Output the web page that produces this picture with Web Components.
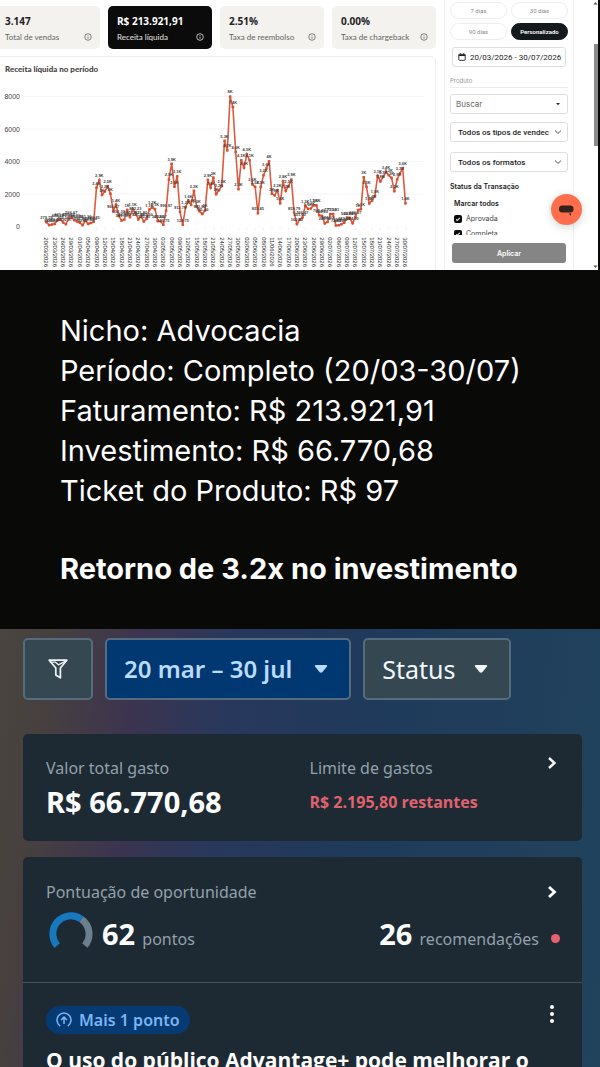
<!DOCTYPE html>
<html lang="pt-BR">
<head>
<meta charset="utf-8">
<meta name="viewport" content="width=device-width, initial-scale=1">
<title>Retorno de 3.2x no investimento</title>
<style>
	body {
		margin: 0;
		height: 100vh;
		display: flex;
		flex-direction: column;
		overflow: hidden;
		background: #090908;
		font-family: "Open Sans", "Noto Sans", sans-serif;
	}
	ads-manager {
		flex: 1;
	}
</style>
</head>
<body>
	<sales-dashboard>
		<stat-card slot="stats" value="3.147">Total de vendas</stat-card>
		<stat-card slot="stats" value="R$ 213.921,91" active>Receita líquida</stat-card>
		<stat-card slot="stats" value="2.51%">Taxa de reembolso</stat-card>
		<stat-card slot="stats" value="0.00%">Taxa de chargeback</stat-card>
		<revenue-chart slot="chart">Receita líquida no período</revenue-chart>
		<filter-panel slot="filters"></filter-panel>
	</sales-dashboard>

	<case-summary>
		<div>Nicho: Advocacia</div>
		<div>Período: Completo (20/03-30/07)</div>
		<div>Faturamento: R$ 213.921,91</div>
		<div>Investimento: R$ 66.770,68</div>
		<div>Ticket do Produto: R$ 97</div>
		<span slot="result">Retorno de 3.2x no investimento</span>
	</case-summary>

	<ads-manager>
		<tool-button slot="tools" kind="icon"></tool-button>
		<tool-button slot="tools" kind="primary">20 mar – 30 jul</tool-button>
		<tool-button slot="tools">Status</tool-button>
		<spend-card></spend-card>
		<score-card>O uso do público Advantage+ pode melhorar o</score-card>
	</ads-manager>

<script>
class StatCard extends HTMLElement {
	constructor() {
		super();

		this.attachShadow({mode: 'open'});
	}

	connectedCallback() {
		const value = this.getAttribute('value') || '';

		this.shadowRoot.innerHTML = `
			<style>
				:host {
					display: block;
					box-sizing: border-box;
					padding: 7px 8px 4px 9px;
					border-radius: 5px;
					background: #f3f2ef;
					color: #66645f;
					font-family: Lato, sans-serif;
					font-size: 8px;
					line-height: 16px;
					white-space: nowrap;
				}
				:host([active]) {
					background: #0a0b0a;
					color: #e6e6e4;
				}
				strong {
					display: block;
					color: #22211f;
					font-family: "Open Sans", sans-serif;
					font-size: 10px;
				}
				:host([active]) strong {
					color: #fff;
				}
				.label {
					display: flex;
					justify-content: space-between;
					align-items: center;
				}
				svg {
					width: 8px;
					height: 8px;
				}
			</style>
			<strong>${value}</strong>
			<div class="label">
				<span><slot></slot></span>
				<svg viewBox="0 0 8 8" fill="none" stroke="currentColor" stroke-width="0.8">
					<circle cx="4" cy="4" r="3.3"/>
					<path d="M4 3.6V5.8M4 2.1V2.9"/>
				</svg>
			</div>
		`;
	}
}

const sales = [
	279.79, 94.9, 131.5, 170.97, 400.25, 441.67, 260.5, 150.37, 498.67, 566.67, 404.5, 322.2, 249.9,
	92.43, 361.1, 171.5, 224.63, 300.25, 2400, 2850, 1950, 2170, 2480, 2030, 966.67, 1360, 652.3,
	381.73, 443.4, 1020, 597.25, 1100, 852.23, 447.63, 621.8, 320.4, 482.3, 1050, 1180, 1080, 341.4,
	333.67, 120.75, 996.97, 2900, 3870, 2450, 3100, 912.79, 122.75, 1200, 1600, 1350, 2200, 1250,
	952.8, 781.4, 1000, 2880, 2400, 3020, 2000, 2240, 2500, 5280, 4690, 8000, 7350, 4600, 2300, 4080,
	3630, 4450, 4080, 2600, 2450, 822.45, 2450, 3160, 3570, 4020, 2030, 1920, 2240, 1430, 2800, 2200,
	2500, 2900, 859.79, 160.4, 451.6, 566.67, 1280, 1100, 1120, 1320, 1310, 702.4, 660.5, 200.3,
	284.5, 771.1, 770.81, 72.43, 82.1, 152.4, 243.6, 561.8, 541.2, 204.9, 600.37, 1020, 1080, 3040,
	2450, 1430, 1600, 1880, 3120, 2780, 3060, 3370, 3160, 3000, 2180, 2900, 3270, 3590, 1430
];

// one label for every third day with sales
const days = [
	'20/03', '23/03', '26/03', '29/03', '01/04', '05/04', '09/04', '12/04', '15/04', '18/04', '21/04',
	'24/04', '27/04', '30/04', '03/05', '06/05', '09/05', '12/05', '15/05', '18/05', '21/05', '24/05',
	'27/05', '30/05', '02/06', '05/06', '08/06', '11/06', '14/06', '17/06', '20/06', '23/06', '26/06',
	'29/06', '02/07', '06/07', '09/07', '12/07', '15/07', '18/07', '21/07', '24/07', '27/07', '30/07'
];

class RevenueChart extends HTMLElement {
	constructor() {
		super();

		this.attachShadow({mode: 'open'});
	}

	connectedCallback() {
		this.render();
	}

	x(index) {
		return 46.5 + index * 2.79;
	}

	y(value) {
		return 146 - value * 130.5 / 8000;
	}

	format(value) {
		if (value >= 1000) return `${(Math.round(value / 100) / 10).toString().replace('.', ',')}K`;

		return value.toFixed(2).replace('.', ',');
	}

	render() {
		const grid = [0, 2000, 4000, 6000, 8000].map(value => `
			<text class="scale" x="20" y="${this.y(value) + 2.5}">${value}</text>
			${value ? `<path class="grid" d="M24 ${this.y(value)}H425"/>` : ''}
		`).join('');
		const dates = days.map((day, i) => `
			<path class="tick" d="M${this.x(i * 3)} 147V149"/>
			<text class="date" transform="translate(${this.x(i * 3) - 2} 156.5) rotate(90)">${day}/2026</text>
		`).join('');
		const points = sales.map((value, i) => `${this.x(i)},${this.y(value)}`).join(' ');
		const dots = sales.map((value, i) => `
			<rect x="${this.x(i) - 1.3}" y="${this.y(value) - 1.3}" width="2.6" height="2.6" rx="0.6"/>
		`).join('');
		const values = sales.map((value, i) => `
			<text class="value" x="${this.x(i)}" y="${this.y(value) - 3}">${this.format(value)}</text>
		`).join('');

		this.shadowRoot.innerHTML = `
			<style>
				:host {
					display: block;
					border: 1px solid #efefee;
					border-width: 1px 1px 0 0;
					border-radius: 0 5px 0 0;
				}
				h2 {
					margin: 0;
					padding: 4px 5px;
					color: #444341;
					font-family: "Open Sans", sans-serif;
					font-family: Lato, sans-serif;
					font-size: 8px;
					font-weight: 900;
					line-height: 16px;
				}
				svg {
					display: block;
					width: 100%;
				}
				.grid {
					stroke: #f1f1f1;
					stroke-width: 0.7;
				}
				.tick {
					stroke: #ddd;
					stroke-width: 0.6;
				}
				text {
					font-family: "Liberation Sans", Arial, sans-serif;
					fill: #444;
				}
				.scale {
					font-size: 7px;
					text-anchor: end;
				}
				.date {
					font-size: 6px;
					fill: #222;
				}
				.value {
					font-size: 4px;
					font-weight: bold;
					text-anchor: middle;
					fill: #444;
				}
				polyline {
					fill: none;
					stroke: #dc5a3e;
					stroke-width: 1.6;
				}
				rect {
					fill: #d9502f;
				}
			</style>
			<h2><slot></slot></h2>
			<svg viewBox="0 0 436 189">
				${grid}
				${dates}
				<polyline points="${points}"/>
				${dots}
				${values}
			</svg>
		`;
	}
}

class FilterPanel extends HTMLElement {
	constructor() {
		super();

		this.attachShadow({mode: 'open'});
	}

	connectedCallback() {
		this.shadowRoot.innerHTML = `
			<style>
				:host {
					display: flex;
					flex-direction: column;
					box-sizing: border-box;
					padding: 2px 5px 6px;
					border: 1px solid #f0f0f0;
					border-width: 0 1px;
					font-family: Inter, Roboto, sans-serif;
					color: #1c1c1c;
				}
				button, input, select {
					box-sizing: border-box;
					margin: 0;
					font: inherit;
					color: inherit;
				}
				.ranges {
					display: grid;
					grid-template-columns: 1fr 1fr;
					gap: 4px;
				}
				.ranges button {
					height: 17px;
					padding: 0;
					border: 1px solid #ededed;
					border-radius: 9px;
					background: #fff;
					color: #8a8a8a;
					font-family: Roboto, sans-serif;
					font-size: 6px;
				}
				.ranges .on {
					border-color: #14191b;
					background: #14191b;
					color: #fff;
					font-weight: 600;
				}
				.field {
					display: flex;
					align-items: center;
					height: 20px;
					box-sizing: border-box;
					border: 1px solid #dedede;
					border-radius: 3px;
					font-family: Roboto, sans-serif;
					font-size: 8px;
				}
				.field input, .field select {
					flex: 1;
					min-width: 0;
					padding: 0;
					border: 0;
					outline: 0;
					background: none;
					appearance: none;
				}
				.field svg {
					flex: none;
					width: 8px;
					height: 8px;
				}
				.date {
					gap: 4px;
					margin: 7px 2px 8px;
					padding: 0 3px 0 5px;
				}
				.caption {
					margin-bottom: 6px;
					border-bottom: 1px solid #ececec;
					color: #999;
					font-size: 6px;
					line-height: 12px;
				}
				.search {
					margin-bottom: 8px;
					padding: 0 5px;
					font-family: Inter, sans-serif;
				}
				.search input::placeholder {
					color: #666;
					opacity: 1;
				}
				.pick {
					margin-bottom: 10px;
					padding: 0 5px 0 7px;
					font-weight: 500;
				}
				fieldset {
					min-width: 0;
					margin: 0;
					padding: 0;
					border: 0;
				}
				legend {
					padding: 0;
					font-size: 7px;
					font-weight: 600;
					line-height: 9px;
				}
				.list {
					max-height: 44px;
					overflow: hidden;
					padding: 0 4px;
					font-size: 7px;
				}
				.list b {
					display: block;
					padding-top: 5px;
					font-weight: 600;
					line-height: 15px;
				}
				.list label {
					display: flex;
					align-items: center;
					gap: 4px;
					height: 15px;
					color: #444;
				}
				.list input {
					display: grid;
					place-items: center;
					width: 8px;
					height: 8px;
					border-radius: 2px;
					background: #0b0b0b;
					appearance: none;
				}
				.list input::after {
					content: '';
					width: 3px;
					height: 1px;
					border: solid #fff;
					border-width: 0 0 1px 1px;
					transform: rotate(-45deg);
				}
				.apply {
					height: 20px;
					margin: 8px 2px 0;
					border: 0;
					border-radius: 3px;
					background: #858585;
					color: #fff;
					font-size: 7px;
					font-weight: 600;
				}
			</style>
			<div class="ranges">
				<button>7 dias</button>
				<button>30 dias</button>
				<button>90 dias</button>
				<button class="on">Personalizado</button>
			</div>
			<div class="field date">
				<svg viewBox="0 0 8 8" fill="none" stroke="#222" stroke-width="0.9">
					<rect x="0.8" y="1.3" width="6.4" height="6" rx="0.6"/>
					<path d="M0.8 2.3H7.2" stroke-width="1.5"/>
					<path d="M2.4 0.2V1.5M5.6 0.2V1.5"/>
				</svg>
				<input type="text" value="20/03/2026 - 30/07/2026" aria-label="Período">
			</div>
			<label class="caption" for="product">Produto</label>
			<div class="field search">
				<input id="product" type="text" placeholder="Buscar">
				<svg viewBox="0 0 8 8"><path d="M2 3H6L4 5.3Z" fill="#333"/></svg>
			</div>
			<div class="field pick">
				<select aria-label="Tipo de vendedor"><option>Todos os tipos de vendec</option></select>
				<svg viewBox="0 0 8 8"><path d="M1 2.6L4 5.4L7 2.6" fill="none" stroke="#444" stroke-width="0.9"/></svg>
			</div>
			<div class="field pick">
				<select aria-label="Formato"><option>Todos os formatos</option></select>
				<svg viewBox="0 0 8 8"><path d="M1 2.6L4 5.4L7 2.6" fill="none" stroke="#444" stroke-width="0.9"/></svg>
			</div>
			<fieldset>
				<legend>Status da Transação</legend>
				<div class="list">
					<b>Marcar todos</b>
					<label><input type="checkbox" checked>Aprovada</label>
					<label><input type="checkbox" checked>Completa</label>
				</div>
			</fieldset>
			<button class="apply">Aplicar</button>
		`;
	}
}

class SalesDashboard extends HTMLElement {
	constructor() {
		super();

		this.attachShadow({mode: 'open'});
	}

	connectedCallback() {
		this.shadowRoot.innerHTML = `
			<style>
				:host {
					position: relative;
					display: flex;
					margin-right: 2px;
					background: #fff;
				}
				main {
					flex: 1;
					min-width: 0;
				}
				.stats {
					display: grid;
					grid-template-columns: repeat(4, 1fr);
					gap: 8px;
					margin: 6px 0 7px -4px;
				}
				aside {
					flex: none;
					width: 130px;
					margin: 0 19px 0 8px;
				}
				.scroll {
					display: flex;
					flex-direction: column;
					align-items: center;
					width: 5px;
					justify-content: space-between;
				}
				.scroll i {
					width: 4px;
					height: 102px;
					margin-bottom: 80px;
					background: #8b8b8b;
				}
				.scroll svg {
					width: 5px;
					height: 6px;
				}
				.chat {
					position: absolute;
					right: 16px;
					top: 194px;
					width: 31px;
					height: 31px;
					padding: 0;
					border: 0;
					border-radius: 50%;
					background: #ff6f4d;
					box-shadow: 0 2px 8px rgba(60, 90, 90, 0.25);
				}
				.chat svg {
					display: block;
					width: 100%;
				}
			</style>
			<main>
				<div class="stats"><slot name="stats"></slot></div>
				<slot name="chart"></slot>
			</main>
			<aside><slot name="filters"></slot></aside>
			<div class="scroll">
				<svg viewBox="0 0 5 6"><path d="M0.5 4.5L2.5 2L4.5 4.5Z" fill="#555"/></svg>
				<i></i>
				<svg viewBox="0 0 5 6"><path d="M0.5 1.5L2.5 4L4.5 1.5Z" fill="#555"/></svg>
			</div>
			<button class="chat" aria-label="Chat">
				<svg viewBox="0 0 31 31" fill="#35221d">
					<rect x="8" y="11.5" width="14.5" height="7" rx="3.2"/>
					<path d="M17.6 19.6H20.2L19.6 21.8Z"/>
				</svg>
			</button>
		`;
	}
}

class CaseSummary extends HTMLElement {
	constructor() {
		super();

		this.attachShadow({mode: 'open'});
	}

	connectedCallback() {
		this.shadowRoot.innerHTML = `
			<style>
				:host {
					display: block;
					padding: 41px 60px 40px;
					background: #090908;
					color: #fff;
					font: 400 29px/40px Inter, sans-serif;
					white-space: nowrap;
				}
				p {
					margin: 38px 0 0;
					font-weight: 700;
				}
			</style>
			<slot></slot>
			<p><slot name="result"></slot></p>
		`;
	}
}

class ToolButton extends HTMLElement {
	constructor() {
		super();

		this.attachShadow({mode: 'open'});
	}

	connectedCallback() {
		const icon = this.getAttribute('kind') === 'icon';

		this.shadowRoot.innerHTML = `
			<style>
				:host {
					display: block;
				}
				button {
					display: flex;
					align-items: center;
					gap: 18px;
					box-sizing: border-box;
					height: 62px;
					padding: 0 21px 0 17px;
					border: 2px solid #546c7e;
					border-radius: 5px;
					background: #354751;
					color: #f2f7fb;
					font: 25px/30px "Noto Sans", sans-serif;
					white-space: nowrap;
				}
				:host([kind=primary]) button {
					gap: 22px;
					background: #023871;
					color: #b8dcff;
					font-size: 24px;
					font-weight: 600;
				}
				:host([kind=icon]) button {
					padding: 0 23px;
				}
				svg {
					width: 20px;
					height: 20px;
				}
				.arrow {
					width: 14px;
					height: 10px;
				}
			</style>
			${icon ? `
				<button aria-label="Filtrar">
					<svg class="funnel" viewBox="0 0 20 20" fill="none" stroke="#eef3f6" stroke-width="1.7" stroke-linejoin="round">
						<path d="M1.2 1.2H18.8L12.4 9V18.8L7.8 16V9Z"/>
						<path d="M1.8 3.2H7.5L10.5 5.8L13.6 4.2L17.4 2.4" stroke-width="1.3"/>
					</svg>
				</button>
			` : `
				<button>
					<slot></slot>
					<svg class="arrow" viewBox="0 0 14 10">
						<path d="M2 1H12Q14 1 12.8 2.8L8.5 8Q7 9.6 5.5 8L1.2 2.8Q0 1 2 1Z" fill="currentColor"/>
					</svg>
				</button>
			`}
		`;
	}
}

class SpendCard extends HTMLElement {
	constructor() {
		super();

		this.attachShadow({mode: 'open'});
	}

	connectedCallback() {
		this.shadowRoot.innerHTML = `
			<style>
				:host {
					display: grid;
					grid-template-columns: 1fr 1fr;
					gap: 5px 16px;
					padding: 22px 25px 22px 23px;
					border-radius: 5px;
					background: #1d2a33;
					color: #93a1ab;
					font-family: "Noto Sans", sans-serif;
					font-size: 16px;
					line-height: 24px;
					white-space: nowrap;
				}
				.limit {
					display: flex;
					justify-content: space-between;
				}
				.total {
					color: #fff;
					font-size: 29px;
					line-height: 34px;
				}
				.left {
					color: #e0626f;
					font-family: "Open Sans", sans-serif;
					font-size: 16px;
					font-weight: 700;
					line-height: 34px;
				}
				svg {
					width: 10px;
					height: 14px;
				}
			</style>
			<div>Valor total gasto</div>
			<div class="limit">
				Limite de gastos
				<svg viewBox="0 0 10 14"><path d="M2 2L7.5 7L2 12" fill="none" stroke="#f4f7f9" stroke-width="2.4"/></svg>
			</div>
			<strong class="total">R$ 66.770,68</strong>
			<div class="left">R$ 2.195,80 restantes</div>
		`;
	}
}

class ScoreCard extends HTMLElement {
	constructor() {
		super();

		this.attachShadow({mode: 'open'});
	}

	connectedCallback() {
		this.shadowRoot.innerHTML = `
			<style>
				:host {
					display: block;
					border-radius: 5px 5px 0 0;
					background: #1d2a33;
					color: #93a1ab;
					font-family: "Noto Sans", sans-serif;
					font-size: 16px;
					line-height: 24px;
					white-space: nowrap;
				}
				section {
					padding: 23px 25px 26px 23px;
				}
				.tip {
					border-top: 1px solid #43525e;
				}
				.row {
					display: flex;
					justify-content: space-between;
					align-items: center;
				}
				.tip .row {
					align-items: flex-start;
				}
				.scores {
					margin-top: 8px;
				}
				.item {
					display: flex;
					align-items: center;
					gap: 8px;
				}
				.item div {
					padding-top: 6px;
				}
				.item b {
					margin-right: 3px;
					color: #fff;
					font-size: 29px;
				}
				.gauge {
					width: 44px;
					height: 44px;
					margin: 0 1px 0 3px;
				}
				.dot {
					width: 9px;
					height: 9px;
					margin: 9px 0 0 4px;
					border-radius: 50%;
					background: #e8616e;
				}
				.recommendations {
					margin-right: -3px;
				}
				.chevron {
					width: 10px;
					height: 14px;
				}
				.badge {
					display: flex;
					align-items: center;
					gap: 7px;
					padding: 0 10px;
					border-radius: 14px;
					background: #053a72;
					color: #7ab5f5;
					font-weight: 600;
					line-height: 28px;
				}
				.badge svg {
					width: 16px;
					height: 16px;
				}
				.more {
					width: 10px;
					padding: 0;
					border: 0;
					background: none;
				}
				.more svg {
					display: block;
					width: 100%;
					overflow: visible;
				}
				h2 {
					margin: 12px 0 0;
					color: #fff;
					font-family: "Open Sans", sans-serif;
					font-size: 21px;
					line-height: 28px;
				}
			</style>
			<section>
				<div class="row">
					Pontuação de oportunidade
					<svg class="chevron" viewBox="0 0 10 14"><path d="M2 2L7.5 7L2 12" fill="none" stroke="#fff" stroke-width="2.8"/></svg>
				</div>
				<div class="row scores">
					<div class="item">
						<svg class="gauge" viewBox="0 0 44 44" fill="none" stroke-width="7">
							<path d="M32.3 7.2A18 18 0 0 1 35.8 33.6" stroke="#6b7f8e"/>
							<path d="M8.2 33.6A18 18 0 0 1 32.3 7.2" stroke="#1678bd"/>
						</svg>
						<div><b>62</b> pontos</div>
					</div>
					<div class="item recommendations">
						<div><b>26</b> recomendações</div>
						<span class="dot"></span>
					</div>
				</div>
			</section>
			<section class="tip">
				<div class="row">
					<span class="badge">
						<svg viewBox="0 0 16 16" fill="none" stroke="currentColor" stroke-width="1.5">
							<path d="M4.2 14A7 7 0 1 1 11.8 14"/>
							<path d="M8 12V5.2M5 8L8 5L11 8"/>
						</svg>
						Mais 1 ponto
					</span>
					<button class="more" aria-label="Mais opções">
						<svg viewBox="0 0 10 16" fill="#fff">
							<circle cx="5" cy="1" r="2"/>
							<circle cx="5" cy="8" r="2"/>
							<circle cx="5" cy="15" r="2"/>
						</svg>
					</button>
				</div>
				<h2><slot></slot></h2>
			</section>
		`;
	}
}

class AdsManager extends HTMLElement {
	constructor() {
		super();

		this.attachShadow({mode: 'open'});
	}

	connectedCallback() {
		this.shadowRoot.innerHTML = `
			<style>
				:host {
					display: flex;
					flex-direction: column;
					gap: 16px;
					min-height: 0;
					overflow: hidden;
					padding: 9px 18px 0 23px;
					background: linear-gradient(97deg, #49453f 0%, #47403f 8%, #3c3450 22%, #28385c 36%, #1f3a5b 58%, #21435c 100%);
				}
				nav {
					display: flex;
					gap: 12px;
					margin-bottom: 18px;
				}
			</style>
			<nav><slot name="tools"></slot></nav>
			<slot></slot>
		`;
	}
}

customElements.define('stat-card', StatCard);
customElements.define('revenue-chart', RevenueChart);
customElements.define('filter-panel', FilterPanel);
customElements.define('sales-dashboard', SalesDashboard);
customElements.define('case-summary', CaseSummary);
customElements.define('tool-button', ToolButton);
customElements.define('spend-card', SpendCard);
customElements.define('score-card', ScoreCard);
customElements.define('ads-manager', AdsManager);
</script>
</body>
</html>
